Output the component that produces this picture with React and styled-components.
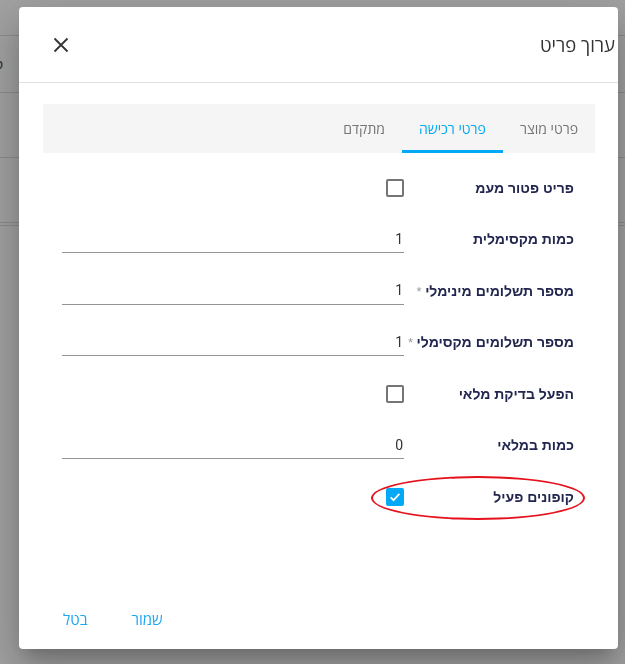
import styled, { createGlobalStyle } from "styled-components";

const Global = createGlobalStyle`
  html, body {
    margin: 0;
    padding: 0;
    width: 625px;
    height: 664px;
    overflow: hidden;
    font-family: "Liberation Sans", "DejaVu Sans", sans-serif;
  }
`;

const rows = [
  { label: "פריט פטור מעמ", type: "check" },
  { label: "כמות מקסימלית", type: "input", value: "1" },
  { label: "מספר תשלומים מינימלי", type: "input", value: "1", req: true },
  { label: "מספר תשלומים מקסימלי", type: "input", value: "1", req: true },
  { label: "הפעל בדיקת מלאי", type: "check" },
  { label: "כמות במלאי", type: "input", value: "0" },
  { label: "קופונים פעיל", type: "check", checked: true, marked: true },
];

const App = () => {
  return (
    <>
      <Global />
      <Page>
        <PageRow $h={36} />
        <PageRow $h={57}>
          <PageText>ס</PageText>
        </PageRow>
        <PageRow $h={65} />
        <PageRow $h={68} $double />
      </Page>
      <Backdrop>
        <Dialog dir="rtl">
          <Header>
            <Title>ערוך פריט</Title>
            <CloseButton aria-label="close">
              <svg width="16" height="16" viewBox="0 0 16 16">
                <path
                  d="M1.5 1.5 L14.5 14.5 M14.5 1.5 L1.5 14.5"
                  stroke="#333"
                  strokeWidth="1.8"
                  fill="none"
                />
              </svg>
            </CloseButton>
          </Header>
          <TabBar>
            <Tab>פרטי מוצר</Tab>
            <Tab $active>פרטי רכישה</Tab>
            <Tab>מתקדם</Tab>
          </TabBar>
          <Form>
            {rows.map((r) => (
              <Row key={r.label}>
                <Label>
                  {r.label}
                  {r.req && <Req> *</Req>}
                </Label>
                <Field>
                  {r.type === "check" ? (
                    <Check $checked={r.checked}>
                      {r.checked && (
                        <svg width="14" height="14" viewBox="0 0 24 24">
                          <path
                            d="M4.5 12.5 L9.5 17.5 L19.5 6.5"
                            stroke="#fff"
                            strokeWidth="3"
                            fill="none"
                          />
                        </svg>
                      )}
                    </Check>
                  ) : (
                    <Input defaultValue={r.value} readOnly />
                  )}
                </Field>
                {r.marked && <Mark />}
              </Row>
            ))}
          </Form>
          <Footer>
            <TextButton>שמור</TextButton>
            <TextButton>בטל</TextButton>
          </Footer>
        </Dialog>
      </Backdrop>
    </>
  );
};

export default App;

const Page = styled.div`
  width: 625px;
  height: 664px;
  background: #fff;
`;
const PageRow = styled.div`
  position: relative;
  height: ${(p) => p.$h}px;
  box-sizing: border-box;
  border-bottom: 1px solid #ddd;
  ${(p) => p.$double && "border-bottom: 4px double #ddd;"}
`;
const PageText = styled.span`
  position: absolute;
  left: -6px;
  top: 20px;
  font-size: 14px;
  color: #555;
`;
const Backdrop = styled.div`
  position: fixed;
  inset: 0;
  background: rgba(0, 0, 0, 0.37);
  display: flex;
  align-items: flex-start;
  justify-content: flex-start;
`;
const Dialog = styled.div`
  margin: 7px 0 0 19px;
  width: 599px;
  height: 642px;
  background: #fff;
  border-radius: 4px;
  display: flex;
  flex-direction: column;
  box-shadow: 0px 11px 15px -7px rgba(0, 0, 0, 0.2),
    0px 24px 38px 3px rgba(0, 0, 0, 0.14), 0px 9px 46px 8px rgba(0, 0, 0, 0.12);
`;
const Header = styled.div`
  height: 76px;
  flex-shrink: 0;
  box-sizing: border-box;
  border-bottom: 1px solid #e0e0e0;
  display: flex;
  align-items: center;
  justify-content: space-between;
  padding: 0 3px 0 30px;
`;
const Title = styled.h2`
  margin: 0;
  font-family: "Open Sans", "Liberation Sans", sans-serif;
  font-weight: 400;
  font-size: 18.5px;
  color: #333;
`;
const CloseButton = styled.button`
  width: 24px;
  height: 24px;
  padding: 0;
  border: none;
  background: none;
  display: flex;
  align-items: center;
  justify-content: center;
`;
const TabBar = styled.div`
  margin: 21px 23px 0 24px;
  height: 49px;
  background: #f5f5f5;
  display: flex;
`;
const Tab = styled.div`
  display: flex;
  align-items: center;
  padding: 3px 17px 0;
  box-sizing: border-box;
  font-family: "Open Sans", "Liberation Sans", sans-serif;
  font-size: 14px;
  color: ${(p) => (p.$active ? "#03a9f4" : "#757575")};
  border-bottom: 3px solid ${(p) => (p.$active ? "#03a9f4" : "transparent")};
`;
const Form = styled.div`
  padding: 9px 44px 0 43px;
`;
const Row = styled.div`
  position: relative;
  height: 51.5px;
  display: grid;
  grid-template-columns: 160px 1fr;
  column-gap: 10px;
  align-items: center;
`;
const Label = styled.div`
  font-size: 14px;
  font-weight: 700;
  color: #22264f;
  white-space: nowrap;
`;
const Req = styled.span`
  color: #9a9a9a;
  font-weight: 400;
  font-size: 13px;
`;
const Field = styled.div`
  display: flex;
  align-items: center;
`;
const Check = styled.div`
  width: 18px;
  height: 18px;
  box-sizing: border-box;
  border-radius: 2px;
  border: 2px solid ${(p) => (p.$checked ? "#03a9f4" : "#757575")};
  background: ${(p) => (p.$checked ? "#03a9f4" : "#fff")};
  display: flex;
  align-items: center;
  justify-content: center;
`;
const Input = styled.input`
  width: 100%;
  height: 28px;
  box-sizing: border-box;
  border: none;
  border-bottom: 1px solid #949494;
  outline: none;
  padding: 0 1px;
  font-family: "Roboto", "Liberation Sans", sans-serif;
  font-size: 14px;
  color: #333;
  text-align: right;
  background: transparent;
`;
const Mark = styled.div`
  position: absolute;
  right: -11px;
  top: 5px;
  width: 214px;
  height: 44px;
  box-sizing: border-box;
  border: 2.5px solid #e5121d;
  border-radius: 50%;
  pointer-events: none;
`;
const Footer = styled.div`
  margin-top: auto;
  display: flex;
  justify-content: flex-end;
  gap: 20px;
  padding: 0 0 12px 32px;
`;
const TextButton = styled.button`
  height: 36px;
  padding: 0 12px;
  border: none;
  background: none;
  font-family: "Open Sans", "Liberation Sans", sans-serif;
  font-size: 15px;
  color: #1ea7f0;
`;
